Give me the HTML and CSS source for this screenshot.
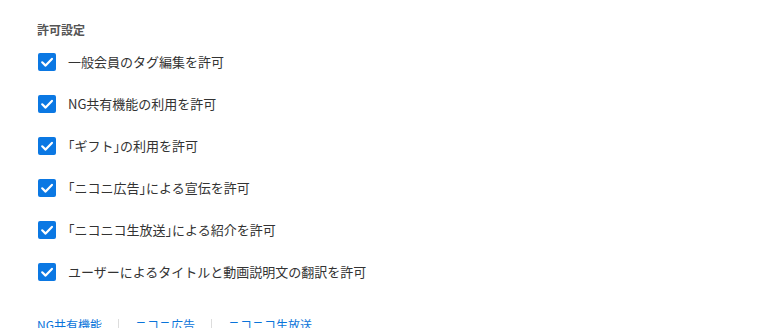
FILE: index.html
```html
<!DOCTYPE html>
<html lang="ja">
<head>
<meta charset="utf-8">
<link rel="stylesheet" href="styles.css">
</head>
<body>
<div class="panel">
  <div class="heading">許可設定</div>
  <ul class="options">
    <li class="option"><span class="box"><svg viewBox="0 0 18 18" width="18" height="18"><path d="M4.2 9.3 L7.6 12.6 L13.9 5.9" fill="none" stroke="#fff" stroke-width="2.2" stroke-linecap="round" stroke-linejoin="round"/></svg></span><span class="label">一般会員のタグ編集を許可</span></li>
    <li class="option"><span class="box"><svg viewBox="0 0 18 18" width="18" height="18"><path d="M4.2 9.3 L7.6 12.6 L13.9 5.9" fill="none" stroke="#fff" stroke-width="2.2" stroke-linecap="round" stroke-linejoin="round"/></svg></span><span class="label">NG共有機能の利用を許可</span></li>
    <li class="option"><span class="box"><svg viewBox="0 0 18 18" width="18" height="18"><path d="M4.2 9.3 L7.6 12.6 L13.9 5.9" fill="none" stroke="#fff" stroke-width="2.2" stroke-linecap="round" stroke-linejoin="round"/></svg></span><span class="label"><span class="bk">「</span>ギフト<span class="bk">」</span>の利用を許可</span></li>
    <li class="option"><span class="box"><svg viewBox="0 0 18 18" width="18" height="18"><path d="M4.2 9.3 L7.6 12.6 L13.9 5.9" fill="none" stroke="#fff" stroke-width="2.2" stroke-linecap="round" stroke-linejoin="round"/></svg></span><span class="label"><span class="bk">「</span>ニコニ広告<span class="bk">」</span>による宣伝を許可</span></li>
    <li class="option"><span class="box"><svg viewBox="0 0 18 18" width="18" height="18"><path d="M4.2 9.3 L7.6 12.6 L13.9 5.9" fill="none" stroke="#fff" stroke-width="2.2" stroke-linecap="round" stroke-linejoin="round"/></svg></span><span class="label"><span class="bk">「</span>ニコニコ生放送<span class="bk">」</span>による紹介を許可</span></li>
    <li class="option"><span class="box"><svg viewBox="0 0 18 18" width="18" height="18"><path d="M4.2 9.3 L7.6 12.6 L13.9 5.9" fill="none" stroke="#fff" stroke-width="2.2" stroke-linecap="round" stroke-linejoin="round"/></svg></span><span class="label">ユーザーによるタイトルと動画説明文の翻訳を許可</span></li>
  </ul>
  <div class="links">
    <a class="link" href="#">NG共有機能</a><span class="sep"></span><a class="link" href="#">ニコニ広告</a><span class="sep"></span><a class="link" href="#">ニコニコ生放送</a>
  </div>
</div>
</body>
</html>
```
FILE: styles.css
```css
html, body {
  margin: 0;
  padding: 0;
  background: #fff;
  overflow: hidden;
}
body {
  font-family: "Noto Sans CJK JP", "Noto Sans", sans-serif;
  color: #333;
}
.panel {
  padding: 21px 0 0 37px;
}
.heading {
  font-size: 12px;
  line-height: 18px;
  font-weight: bold;
  color: #555;
}
.options {
  list-style: none;
  margin: 14px 0 0 0;
  padding: 0;
  display: flex;
  flex-direction: column;
  gap: 24px;
}
.option {
  display: flex;
  align-items: center;
  height: 18px;
}
.box {
  width: 18px;
  height: 18px;
  margin-left: 1px;
  border-radius: 2px;
  background: #0b78e3;
  display: flex;
}
.label {
  margin-left: 12px;
  font-size: 13px;
  line-height: 18px;
  color: #333;
}
.bk {
  font-feature-settings: "halt" 1;
}
.links {
  margin-top: 35px;
  display: flex;
  align-items: center;
  font-size: 12px;
  line-height: 18px;
}
.link {
  color: #0a74da;
  text-decoration: none;
}
.sep {
  width: 1px;
  height: 12px;
  background: #ddd;
  margin: 0 16px;
}
```
